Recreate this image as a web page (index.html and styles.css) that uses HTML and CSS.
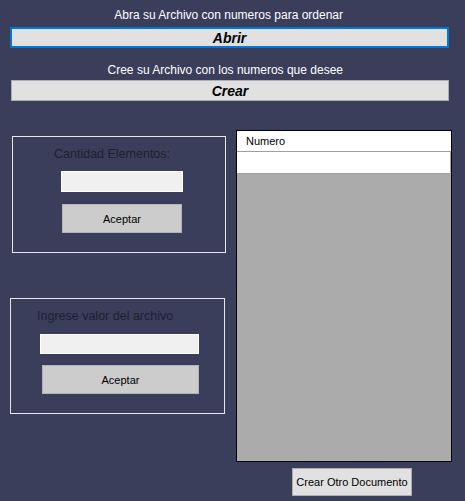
FILE: index.html
```html
<!DOCTYPE html>
<html lang="es">

<head>
    <meta charset="UTF-8">
    <meta name="viewport" content="width=device-width, initial-scale=1.0">
    <title>Ordenar numeros</title>
    <link rel="stylesheet" href="styles.css">
</head>

<body>
    <div class="top">
        <div class="caption">Abra su Archivo con numeros para ordenar</div>
        <button class="big-btn focused">Abrir</button>
        <div class="caption second">Cree su Archivo con los numeros que desee</div>
        <button class="big-btn crear">Crear</button>
    </div>

    <div class="main">
        <div class="left">
            <!-- cantidad de elementos -->
            <div class="group group-one">
                <div class="group-label">Cantidad Elementos:</div>
                <input type="text" class="field">
                <button class="accept">Aceptar</button>
            </div>

            <!-- valor del archivo -->
            <div class="group group-two">
                <div class="group-label">Ingrese valor del archivo</div>
                <input type="text" class="field">
                <button class="accept">Aceptar</button>
            </div>
        </div>

        <div class="right">
            <div class="grid">
                <div class="grid-head">Numero</div>
                <div class="grid-row"></div>
            </div>
            <button class="doc-btn">Crear Otro Documento</button>
        </div>
    </div>
</body>

</html>
```

FILE: styles.css
```css
body {
    margin: 0;
    width: 465px;
    height: 501px;
    overflow: hidden;
    background-color: #3a3e5a;
    font-family: "Liberation Sans", Arial, sans-serif;
}

button,
input {
    font-family: "Liberation Sans", Arial, sans-serif;
    box-sizing: border-box;
    margin: 0;
    padding: 0;
    display: block;
    outline: none;
}

.top {
    padding-top: 8px;
}

.caption {
    color: #ffffff;
    font-size: 12px;
    line-height: 14px;
    height: 14px;
    text-align: right;
    padding-right: 122px;
}

.caption.second {
    margin-top: 15px;
}

.big-btn {
    margin: 5px 0 0 10px;
    width: 439px;
    height: 21px;
    background-color: #e1e1e1;
    border: 1px solid #adadad;
    color: #000;
    font-size: 14px;
    font-weight: bold;
    font-style: italic;
}

.big-btn.focused {
    border: 2px solid #0078d7;
}

.big-btn.crear {
    margin-top: 3px;
    margin-left: 11px;
    width: 438px;
}

.main {
    display: flex;
}

.left {
    width: 236px;
    padding-top: 35px;
}

.group {
    box-sizing: border-box;
    border: 1px solid #e6e6e6;
}

.group-one {
    margin-left: 12px;
    width: 214px;
    height: 117px;
}

.group-two {
    margin-left: 10px;
    margin-top: 45px;
    width: 215px;
    height: 116px;
}

.group-label {
    color: #1f2030;
    font-size: 12.5px;
    line-height: 14px;
    margin-top: 10px;
}

.group-one .group-label {
    margin-left: 41px;
}

.group-two .group-label {
    margin-left: 26px;
}

.field {
    background-color: #f0f0f0;
    border: 1px solid #ffffff;
}

.group-one .field {
    margin: 10px 0 0 48px;
    width: 122px;
    height: 21px;
}

.group-two .field {
    margin: 11px 0 0 29px;
    width: 159px;
    height: 20px;
}

.accept {
    height: 29px;
    background-color: #cccccc;
    border: 1px solid #b4b4b4;
    color: #000;
    font-size: 11px;
}

.group-one .accept {
    margin: 12px 0 0 49px;
    width: 120px;
}

.group-two .accept {
    margin: 11px 0 0 31px;
    width: 157px;
}

.right {
    padding-top: 29px;
}

.grid {
    box-sizing: border-box;
    width: 216px;
    height: 332px;
    border: 1px solid #000;
    background-color: #ababab;
}

.grid-head {
    height: 20px;
    background: #fff;
    border-bottom: 1px solid #a0a0a0;
    font-size: 11px;
    line-height: 20px;
    padding-left: 9px;
    color: #000;
}

.grid-row {
    height: 21px;
    background: #fff;
    border-bottom: 1px solid #a0a0a0;
    margin-right: 1px;
}

.doc-btn {
    margin: 6px 0 0 56px;
    width: 120px;
    height: 28px;
    background-color: #e1e1e1;
    border: 1px solid #adadad;
    color: #000;
    font-size: 11px;
}
```
